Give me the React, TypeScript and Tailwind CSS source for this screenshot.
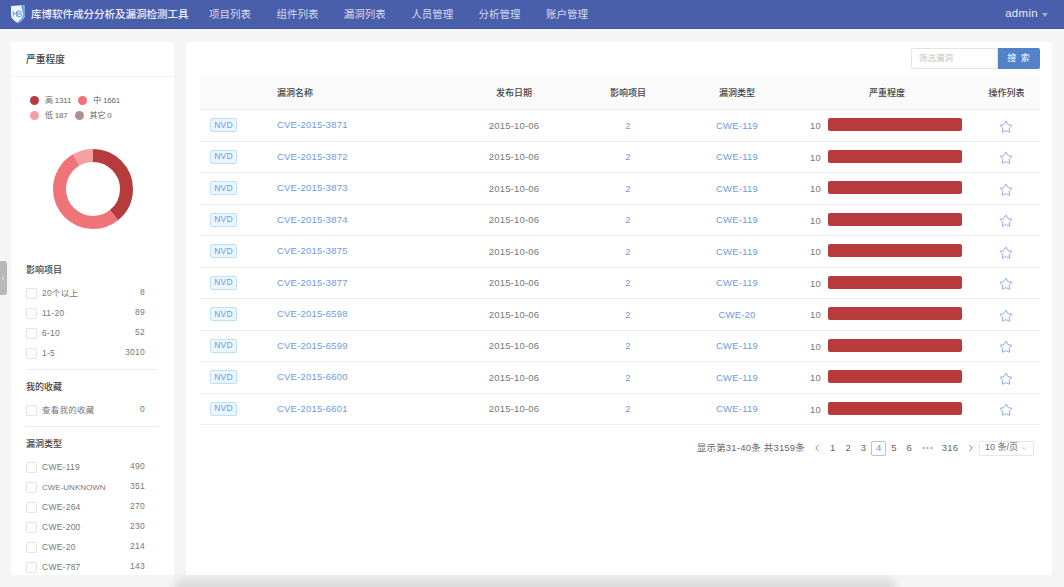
import React from 'react';
import { ChevronDown, ChevronLeft, ChevronRight, Star } from 'lucide-react';

const navItems = ['项目列表', '组件列表', '漏洞列表', '人员管理', '分析管理', '账户管理'];

const legend = [
  [
    { label: '高 1311', color: 'bg-[#b73a3c]' },
    { label: '中 1661', color: 'bg-[#f07377]' },
  ],
  [
    { label: '低 187', color: 'bg-[#f4a0a3]' },
    { label: '其它 0', color: 'bg-[#a89393]' },
  ],
];

const rows = [
  ['CVE-2015-3871', 'CWE-119'],
  ['CVE-2015-3872', 'CWE-119'],
  ['CVE-2015-3873', 'CWE-119'],
  ['CVE-2015-3874', 'CWE-119'],
  ['CVE-2015-3875', 'CWE-119'],
  ['CVE-2015-3877', 'CWE-119'],
  ['CVE-2015-6598', 'CWE-20'],
  ['CVE-2015-6599', 'CWE-119'],
  ['CVE-2015-6600', 'CWE-119'],
  ['CVE-2015-6601', 'CWE-119'],
];

const columns = 'grid grid-cols-[77px_168px_138px_90px_128px_172px_67px] items-center';

const Logo = () => (
  <svg width="16" height="20" viewBox="0 0 16 20">
    <path d="M1 2 L15 1 L15 12 Q14 16 8 19 Q2 16 1 12 Z" fill="#f2f5fb" />
    <path d="M11 1.2 L15 1 L15 12 Q14 16 8 19 L8 17.4 Q13 14.5 13 10 Z" fill="#6ea6de" />
    <path d="M3.2 7 V12.5 M6.6 7 V12.5 M3.2 9.7 H6.6" stroke="#4a8fd6" strokeWidth="0.8" fill="none" />
    <path d="M7.8 7 H10 Q11.3 7.1 11.3 8.3 Q11.3 9.6 10 9.7 H7.8 M10 9.7 Q11.7 9.9 11.7 11.1 Q11.7 12.5 10 12.5 H7.8 V7" stroke="#4a8fd6" strokeWidth="0.8" fill="none" />
  </svg>
);

const Donut = () => {
  // r = 33.5, stroke 13: high 39%, mid 53%, low 8%
  const c = 2 * Math.PI * 33.5;
  const parts = [
    { value: 0.392, color: '#b73a3c', start: 0 },
    { value: 0.523, color: '#f07377', start: 0.392 },
    { value: 0.085, color: '#f4a0a3', start: 0.915 },
  ];
  return (
    <svg width="80" height="80" viewBox="0 0 80 80" className="-rotate-90">
      {parts.map((p) => (
        <circle
          key={p.color}
          cx="40"
          cy="40"
          r="33.5"
          fill="none"
          stroke={p.color}
          strokeWidth="13"
          strokeDasharray={`${p.value * c} ${c}`}
          strokeDashoffset={-p.start * c}
        />
      ))}
    </svg>
  );
};

const FilterRow = ({ label, count, tight }: { label: string; count: string | number; tight?: boolean }) => (
  <div className="flex h-5 items-center text-[8.5px] tracking-[0.25px] text-[#777]">
    <span className="h-[11px] w-[11px] rounded-[2px] border border-[#e4e4e4] bg-white" />
    <span className={`ml-[5px] flex-1 pt-[1px] ${tight ? 'text-[8px] tracking-[0px]' : ''}`}>{label}</span>
    <span className="w-[30px] pb-[1px] text-right">{count}</span>
  </div>
);

const FilterTitle = ({ children }: { children: React.ReactNode }) => (
  <h3 className="text-[9px] leading-[12px] font-medium text-[#444]">{children}</h3>
);

const Sidebar = () => (
  <aside className="relative h-[533px] w-[163px] shrink-0 overflow-hidden rounded-[2px] bg-white">
    <div className="flex h-[35px] items-center border-b border-[#f2f2f2] px-[15px] pt-[2px] text-[9.75px] font-medium text-[#444]">
      严重程度
    </div>
    <div className="flex flex-col gap-[4px] pt-[18px] pl-[19px]">
      {legend.map((line, i) => (
        <div key={i} className="flex h-[11px] items-center gap-[7px]">
          {line.map((item) => (
            <div key={item.label} className="flex items-center gap-[6px] text-[8px] tracking-[-0.2px] text-[#666]">
              <span className={`h-[9px] w-[9px] rounded-full ${item.color}`} />
              {item.label}
            </div>
          ))}
        </div>
      ))}
    </div>
    <div className="mt-[28px] flex justify-center">
      <Donut />
    </div>
    <div className="mt-[35px] px-[15px] pr-[16px]">
      <FilterTitle>影响项目</FilterTitle>
      <div className="mt-[7px] mr-[13px]">
        <FilterRow label="20个以上" count={8} />
        <FilterRow label="11-20" count={89} />
        <FilterRow label="6-10" count={52} />
        <FilterRow label="1-5" count={3010} />
      </div>
      <div className="mt-[6px] mb-[11px] border-t border-[#ececec]" />
      <FilterTitle>我的收藏</FilterTitle>
      <div className="mt-[7px] mr-[13px]">
        <FilterRow label="查看我的收藏" count={0} />
      </div>
      <div className="mt-[6px] mb-[11px] border-t border-[#ececec]" />
      <FilterTitle>漏洞类型</FilterTitle>
      <div className="mt-[7px] mr-[13px]">
        <FilterRow label="CWE-119" count={490} />
        <FilterRow label="CWE-UNKNOWN" count={351} tight />
        <FilterRow label="CWE-264" count={270} />
        <FilterRow label="CWE-200" count={230} />
        <FilterRow label="CWE-20" count={214} />
        <FilterRow label="CWE-787" count={143} />
      </div>
    </div>
  </aside>
);

const Pagination = () => (
  <div className="mt-[15px] mr-[6px] flex h-[16px] items-center justify-end text-[9.5px] tracking-[0.2px] text-[#666]">
    <span className="mr-[7px]">显示第31-40条 共3159条</span>
    <ChevronLeft size={10} className="mr-[3px]" />
    {['1', '2', '3'].map((n) => (
      <span key={n} className="w-[15.4px] text-center">
        {n}
      </span>
    ))}
    <span className="flex h-[15px] w-[15px] items-center justify-center rounded-[2px] border border-[#a9c6ec] text-[#6f9ade]">
      4
    </span>
    {['5', '6'].map((n) => (
      <span key={n} className="w-[15.4px] text-center">
        {n}
      </span>
    ))}
    <span className="w-[22px] text-center text-[8px] tracking-[1px] text-[#aaa]">•••</span>
    <span className="w-[22px] text-center">316</span>
    <ChevronRight size={10} className="mr-[3px] ml-[5px]" />
    <span className="flex h-[15px] w-[55px] items-center justify-between rounded-[2px] border border-[#e6e6e6] pr-[4px] pl-[5px] text-[9px] tracking-normal whitespace-nowrap">
      10 条/页
      <ChevronDown size={9} className="text-[#bbb]" />
    </span>
  </div>
);

export default function App() {
  return (
    <div className="relative h-[587px] w-[1064px] overflow-hidden bg-[#f5f5f5] font-['Liberation_Sans','Noto_Sans_CJK_SC',sans-serif]">
      <header className="flex h-[29px] items-center border-b border-[#3f57a0] bg-[#4a5fab] pl-[10px] text-white">
        <Logo />
        <span className="ml-[5px] w-[178px] pt-[1px] text-[10.5px] font-medium text-[#eef0f8]">库博软件成分分析及漏洞检测工具</span>
        <nav className="flex gap-[25.4px] pt-[1px] text-[10.5px] text-[#d5daec]">
          {navItems.map((item) => (
            <span key={item}>{item}</span>
          ))}
        </nav>
        <div className="ml-auto flex items-center gap-[4px] pr-[16px] text-[11.5px] tracking-[0.3px] text-[#e6e9f4]">
          admin
          <span className="mt-[1px] h-0 w-0 border-x-[3px] border-t-[4px] border-x-transparent border-t-[#a9aebf]" />
        </div>
      </header>

      <main className="flex gap-[12px] pt-[13px] pl-[11px]">
        <Sidebar />
        <section className="h-[533px] w-[866px] rounded-[2px] bg-white pt-[6px] pr-[12px] pl-[14px]">
          <div className="flex h-[27px] items-start justify-end">
            <div className="flex h-[21px] w-[87px] items-center rounded-l-[2px] border border-[#e3e3e3] pl-[7px] text-[8.5px] text-[#c4c4c4]">
              筛选漏洞
            </div>
            <button className="h-[21px] w-[42px] rounded-r-[2px] bg-[#5282c9] text-[9px] tracking-[1px] text-white">搜 索</button>
          </div>

          <div className={`${columns} h-[35px] border-b border-[#eeeeee] bg-[#fafafa] pt-[3px] text-[9px] font-medium text-[#444]`}>
            <span />
            <span>漏洞名称</span>
            <span className="text-center">发布日期</span>
            <span className="text-center">影响项目</span>
            <span className="text-center">漏洞类型</span>
            <span className="text-center">严重程度</span>
            <span className="text-center">操作列表</span>
          </div>

          {rows.map(([name, type]) => (
            <div key={name} className={`${columns} h-[31.5px] border-b border-[#efefef] text-[9.5px] tracking-[0.2px] text-[#777]`}>
              <span className="ml-[10px] flex h-[14px] w-[27px] items-center justify-center rounded-[2px] border border-[#bfe0fb] bg-[#e9f5ff] text-[8.5px] text-[#6f9ade]">
                NVD
              </span>
              <span className="text-[#6f9ade]">{name}</span>
              <span className="pt-[1px] text-center">2015-10-06</span>
              <span className="pt-[1px] text-center text-[#6f9ade]">2</span>
              <span className="pt-[1px] text-center text-[#6f9ade]">{type}</span>
              <span className="flex items-center">
                <span className="ml-[9px] w-[18px] pt-[2px]">10</span>
                <span className="-mt-[1px] h-[13px] w-[134px] rounded-[2px] bg-[#b73a3c]" />
              </span>
              <span className="flex justify-center pt-[3px] pr-[1px]">
                <Star size={14} strokeWidth={1.5} className="text-[#7b9be8]" />
              </span>
            </div>
          ))}

          <Pagination />
        </section>
      </main>

      {/* Collapse handle on the left edge */}
      <div className="absolute top-[261px] left-0 flex h-[34px] w-[7px] items-center rounded-r-[3px] bg-[#b8b8b8] text-white">
        <ChevronLeft size={8} className="-ml-[1px]" />
      </div>

      {/* Window shadow along the bottom */}
      <div className="absolute -bottom-[4px] left-[175px] h-[16px] w-[720px] bg-gradient-to-t from-[#c8c8c8] to-transparent blur-[4px]" />
    </div>
  );
}
